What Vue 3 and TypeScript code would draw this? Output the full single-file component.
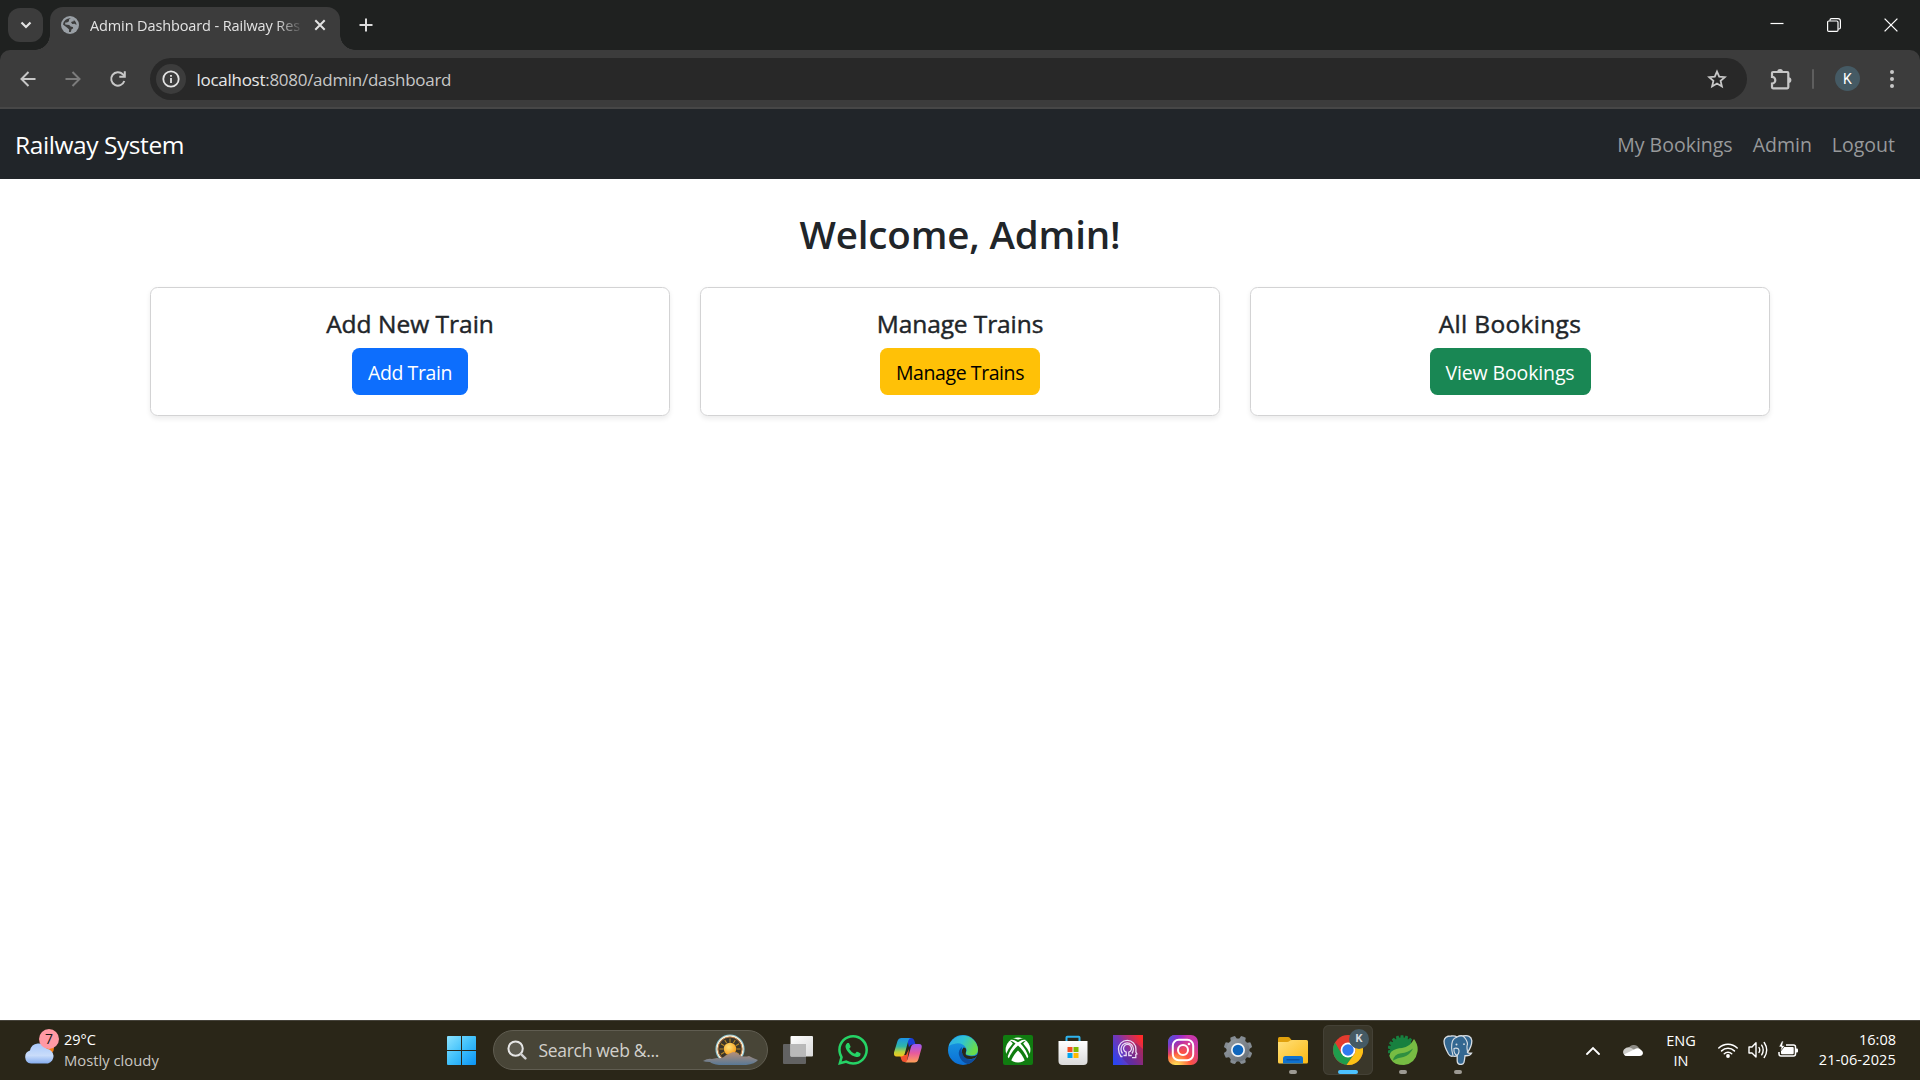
<script setup lang="ts">
interface AdminCard {
  title: string
  action: string
  tone: string
}

const cards: AdminCard[] = [
  { title: 'Add New Train', action: 'Add Train', tone: 'primary' },
  { title: 'Manage Trains', action: 'Manage Trains', tone: 'warning' },
  { title: 'All Bookings', action: 'View Bookings', tone: 'success' },
]

const gearTeeth: number[] = [0, 45, 90, 135, 180, 225, 270, 315]
const springTeeth: number[] = [150, 170, 190, 210, 230, 250, 270, 290, 310]
const sunRays: number[] = [0, 30, 60, 90, 120, 150, 180, 210, 240, 270, 300, 330]
</script>

<template>
  <div class="screen">
    <header class="tabstrip">
      <button class="tab-search" aria-label="Search tabs">
        <svg width="12" height="8" viewBox="0 0 12 8"><path d="M1.500 1.500 6 6l4.500-4.500" fill="none" stroke="#e3e3e3" stroke-width="2.200" /></svg>
      </button>
      <div class="tab">
        <svg class="favicon" width="18" height="18" viewBox="0 0 18 18">
          <circle cx="9" cy="9" r="9" fill="#9aa0a6" />
          <path d="M9.800 2.200 8 3.600v1.700L6 6.600H4.200v2l4 .5 1.400 1.500 2.300.3.3 1.400-1.800 1.100-.4 2.300A7 7 0 0 1 8 16l.1-2.400-1.900-1.900L2 8.500A7 7 0 0 1 9.800 2.200Z" fill="#3c3c3c" />
          <path d="M11.500 3.200 13 4l-.6 1.500h-1.500l-.8 1 1.200 1.400 2.300-.2 1.900 1.200A6.800 6.800 0 0 0 11.500 3.200Z" fill="#3c3c3c" />
        </svg>
        <span class="tab-title">Admin Dashboard - Railway Res</span>
        <svg class="tab-close" width="12" height="12" viewBox="0 0 12 12"><path d="m1.300 1.300 9.400 9.400m0-9.400-9.400 9.400" stroke="#e3e3e3" stroke-width="2" /></svg>
      </div>
      <svg class="tab-new" width="14" height="14" viewBox="0 0 14 14"><path d="M7 .5v13M.5 7h13" stroke="#dcdcdc" stroke-width="2" /></svg>
      <div class="window-controls">
        <svg width="14" height="14" viewBox="0 0 14 14"><path d="M.5 5.500h13" stroke="#fff" stroke-width="1.200" /></svg>
        <svg width="14" height="14" viewBox="0 0 14 14"><rect x=".6" y="3" width="10.400" height="10.400" rx="1.200" fill="none" stroke="#fff" stroke-width="1.200" /><path d="M3 2.800V2Q3 .6 4.500.6H11Q13.400.6 13.400 3v6.500q0 1.500-1.400 1.500h-.8" fill="none" stroke="#fff" stroke-width="1.200" /></svg>
        <svg width="14" height="14" viewBox="0 0 14 14"><path d="m.6.6 12.800 12.800m0-12.800L.6 13.400" stroke="#fff" stroke-width="1.300" /></svg>
      </div>
    </header>

    <div class="toolbar">
      <svg class="nav-icon" width="18" height="18" viewBox="0 0 18 18"><path d="M16.500 9H3M9.500 2 2.500 9l7 7" fill="none" stroke="#c7c7c7" stroke-width="2" /></svg>
      <svg class="nav-icon" width="18" height="18" viewBox="0 0 18 18"><path d="M1.500 9H15M8.500 2l7 7-7 7" fill="none" stroke="#7c7c7c" stroke-width="2" /></svg>
      <svg class="nav-icon" width="18" height="18" viewBox="0 0 18 18"><path d="M15.300 11A6.700 6.700 0 1 1 13.800 4.300L15.500 6" fill="none" stroke="#c7c7c7" stroke-width="2" /><path d="M15.800 1.200v5.500h-5.500" fill="none" stroke="#c7c7c7" stroke-width="2" /></svg>
      <div class="omnibox">
        <span class="site-info">
          <svg width="18" height="18" viewBox="0 0 18 18"><circle cx="9" cy="9" r="7.700" fill="none" stroke="#e3e3e3" stroke-width="1.800" /><path d="M9 8v5M9 4.900v1.800" stroke="#e3e3e3" stroke-width="1.800" /></svg>
        </span>
        <span class="url"><b>localhost</b>:8080/admin/dashboard</span>
        <svg class="star" width="20" height="20" viewBox="0 0 20 20"><path d="m10 2.600 2.200 5.100 5.600.5-4.200 3.700 1.300 5.500-4.900-2.900-4.900 2.900 1.300-5.500-4.200-3.700 5.600-.5Z" fill="none" stroke="#c7c7c7" stroke-width="1.800" /></svg>
      </div>
      <svg class="ext" width="22" height="22" viewBox="0 0 22 22"><path d="M3 4h14.300q1 0 1 1v14.300q0 1-1 1H3q-1 0-1-1v-3.800a3.300 3.300 0 0 0 0-6.600V5q0-1 1-1Z" fill="none" stroke="#c7c7c7" stroke-width="2.200" /><path d="M7.200 4a2.900 2.900 0 0 1 5.800 0ZM18.500 9.200a2.900 2.900 0 0 1 0 5.800Z" fill="#c7c7c7" /></svg>
      <i class="divider"></i>
      <span class="avatar">K</span>
      <svg class="menu" width="4" height="20" viewBox="0 0 4 20"><circle cx="2" cy="3" r="2" fill="#c7c7c7" /><circle cx="2" cy="10" r="2" fill="#c7c7c7" /><circle cx="2" cy="17" r="2" fill="#c7c7c7" /></svg>
    </div>

    <nav class="navbar">
      <a class="brand">Railway System</a>
      <div class="links">
        <a>My Bookings</a>
        <a>Admin</a>
        <a>Logout</a>
      </div>
    </nav>

    <main class="page">
      <h1>Welcome, Admin!</h1>
      <div class="cards">
        <section v-for="card in cards" :key="card.title" class="card" :class="card.tone">
          <h2>{{ card.title }}</h2>
          <a class="btn">{{ card.action }}</a>
        </section>
      </div>
    </main>

    <footer class="taskbar">
      <div class="weather">
        <svg width="36" height="38" viewBox="0 0 36 38">
          <defs><linearGradient id="cloud" x1="0" y1="0" x2="0" y2="1"><stop offset="0" stop-color="#a9c9fb" /><stop offset=".6" stop-color="#c9dcfa" /><stop offset="1" stop-color="#86aef0" /></linearGradient></defs>
          <circle cx="22" cy="20" r="7" fill="#f37b12" />
          <path d="M6 35.500a6.600 6.600 0 0 1-1-12.900 8.800 8.800 0 0 1 16.700-1.800A7.500 7.500 0 0 1 23 35.500Z" fill="url(#cloud)" />
          <circle cx="24" cy="11" r="10" fill="#ff99a4" />
          <text x="24" y="16" text-anchor="middle" font-size="14" fill="#1a1a1a">7</text>
        </svg>
        <div class="weather-text">
          <span>29°C</span>
          <span class="cond">Mostly cloudy</span>
        </div>
      </div>

      <svg class="start" width="29" height="29" viewBox="0 0 29 29">
        <defs><linearGradient id="win" x1="0" y1="0" x2="1" y2="1"><stop offset="0" stop-color="#8ce3ff" /><stop offset=".5" stop-color="#3fc0fb" /><stop offset="1" stop-color="#0a93f5" /></linearGradient></defs>
        <path d="M1 0h13v14H0V1q0-1 1-1ZM15 0h13q1 0 1 1v13H15ZM0 15h14v14H1q-1 0-1-1ZM15 15h14v13q0 1-1 1H15Z" fill="url(#win)" />
      </svg>

      <div class="search">
        <svg width="20" height="20" viewBox="0 0 20 20"><circle cx="8.600" cy="8.600" r="7.200" fill="#5d5b50" stroke="#e6e6e6" stroke-width="2" /><path d="m13.800 13.800 4.600 4.600" stroke="#d0d0d0" stroke-width="2.400" stroke-linecap="round" /></svg>
        <span class="query">Search web &amp;...</span>
        <svg class="sun" width="56" height="34" viewBox="0 0 56 34">
          <defs>
            <radialGradient id="sun" cx=".4" cy=".35" r=".7"><stop offset="0" stop-color="#ffe27a" /><stop offset="1" stop-color="#f79a14" /></radialGradient>
            <linearGradient id="hill" x1="0" y1="0" x2="0" y2="1"><stop offset="0" stop-color="#b58f78" /><stop offset="1" stop-color="#587896" /></linearGradient>
          </defs>
          <circle cx="27" cy="16" r="14" fill="#3a352a" stroke="#7fc3d9" stroke-width="1.200" />
          <circle cx="27" cy="16" r="13" fill="none" stroke="#fff3d8" stroke-width="1.400" />
          <circle cx="27" cy="16" r="12" fill="none" stroke="#d98b4a" stroke-width=".8" />
          <path v-for="a in sunRays" :key="a" d="M27 5.500v4" stroke="#b98a26" stroke-width="1" :transform="`rotate(${a} 27 16)`" />
          <circle cx="27" cy="16" r="6.200" fill="url(#sun)" />
          <path d="M0 28q5-3 9-2l5-1q5 1 8-2 5-3 8-4 4 0 8 4 4 1 8 0l4 2 5 2q-3 4-12 5H16q-7-1-9-3-5 0-7-1Z" fill="url(#hill)" />
        </svg>
      </div>

      <div class="apps">
        <div class="app">
          <svg width="30" height="30" viewBox="0 0 30 30">
            <defs><linearGradient id="tv" x1="0" y1="0" x2="1" y2="1"><stop offset="0" stop-color="#fff" /><stop offset="1" stop-color="#dadada" /></linearGradient></defs>
            <rect x="0" y="9" width="23" height="20" rx="1" fill="#626262" /><rect x="7.500" y="1" width="22.500" height="20.500" rx="1" fill="url(#tv)" /><rect x="7.500" y="9" width="15.500" height="12.500" fill="#b9b9b9" />
          </svg>
        </div>
        <div class="app">
          <svg width="30" height="30" viewBox="0 0 24 24"><path fill="#25d366" d="M17.472 14.382c-.297-.149-1.758-.867-2.030-.967-.273-.099-.471-.148-.670.150-.197.297-.767.966-.940 1.164-.173.199-.347.223-.644.075-.297-.150-1.255-.463-2.390-1.475-.883-.788-1.480-1.761-1.653-2.059-.173-.297-.018-.458.130-.606.134-.133.298-.347.446-.520.149-.174.198-.298.298-.497.099-.198.050-.371-.025-.520-.075-.149-.669-1.612-.916-2.207-.242-.579-.487-.500-.669-.510-.173-.008-.371-.010-.570-.010-.198 0-.520.074-.792.372-.272.297-1.040 1.016-1.040 2.479 0 1.462 1.065 2.875 1.213 3.074.149.198 2.096 3.200 5.077 4.487.709.306 1.262.489 1.694.625.712.227 1.360.195 1.871.118.571-.085 1.758-.719 2.006-1.413.248-.694.248-1.289.173-1.413-.074-.124-.272-.198-.570-.347m-5.421 7.403h-.004a9.870 9.870 0 0 1-5.031-1.378l-.361-.214-3.741.982.998-3.648-.235-.374a9.860 9.860 0 0 1-1.510-5.260c.001-5.450 4.436-9.884 9.888-9.884 2.640 0 5.122 1.030 6.988 2.898a9.825 9.825 0 0 1 2.893 6.994c-.003 5.450-4.437 9.884-9.885 9.884m8.413-18.297A11.815 11.815 0 0 0 12.050 0C5.495 0 .160 5.335.157 11.892c0 2.096.547 4.142 1.588 5.945L.057 24l6.305-1.654a11.882 11.882 0 0 0 5.683 1.448h.005c6.554 0 11.890-5.335 11.893-11.893a11.821 11.821 0 0 0-3.480-8.413Z" /></svg>
        </div>
        <div class="app">
          <svg width="30" height="30" viewBox="0 0 30 30">
            <defs>
              <linearGradient id="cpA" x1="0" y1="0" x2="0" y2="1"><stop offset="0" stop-color="#1c94e8" /><stop offset=".45" stop-color="#2fb6a8" /><stop offset=".75" stop-color="#b9d13c" /><stop offset="1" stop-color="#f6c51c" /></linearGradient>
              <linearGradient id="cpB" x1="0" y1="0" x2="0" y2="1"><stop offset="0" stop-color="#9a58f5" /><stop offset=".5" stop-color="#e85a9c" /><stop offset="1" stop-color="#ffa057" /></linearGradient>
            </defs>
            <path d="M14 3h4q2.500 0 3.500 3l1 3.500h-3q-2.500 0-3.500 3Z" fill="#1a3ed8" />
            <path d="M7 20h6l3-6-2 13h-2.500q-2.500 0-3.200-2.500Z" fill="#f0512f" />
            <path d="M8.500 3H18q-2 0-2.800 3l-3.400 12.500Q11 21.500 8 21.500H3.500q-3 0-2.500-4L4.500 6Q5.500 3 8.500 3Z" fill="url(#cpA)" />
            <path d="M22 9h4q3.500 0 2.600 4L25.500 24q-1 3.500-4 3.500H11.500q2.200 0 3-3l3.500-12.500q.9-3 4-3Z" fill="url(#cpB)" />
          </svg>
        </div>
        <div class="app">
          <svg width="30" height="30" viewBox="0 0 30 30">
            <defs>
              <linearGradient id="edA" x1="0" y1="0" x2="1" y2=".4"><stop offset="0" stop-color="#2fa9ea" /><stop offset=".5" stop-color="#2fc4d4" /><stop offset="1" stop-color="#68dc4c" /></linearGradient>
              <linearGradient id="edB" x1="0" y1="0" x2="0" y2="1"><stop offset="0" stop-color="#1b9de2" /><stop offset="1" stop-color="#0b6fd6" /></linearGradient>
            </defs>
            <circle cx="15" cy="15" r="15" fill="url(#edB)" />
            <path d="M.8 11A15 15 0 0 1 30 14.500Q30 20.500 23.500 20.500 17 20.500 17.800 17.800 19.500 15.500 18 13 14.500 7.500 8 8.500 3 9.200.8 11Z" fill="url(#edA)" />
            <path d="M14 12q-4 3-3 8 1.600 7 9 9.200 5-1.700 7.800-6.200Q21 26.500 16 21.500q-3.500-4-2-9.500Z" fill="#0e4c9c" />
            <path d="M15.500 12.500q-2 2-1.500 5 1.600 7.500 9.500 6.500 4.500-.8 6.500-4v6h-1.500Q30 22 29 20q-2.500 1.500-6 1.200-6.500-.3-5.200-3.400 1.300-2.600-.3-4.800Z" fill="#2a2618" />
            <path d="M30 18v12h-9q5-1.500 8-6.500Z" fill="#2a2618" />
          </svg>
        </div>
        <div class="app">
          <svg width="30" height="30" viewBox="0 0 30 30"><rect width="30" height="30" rx="2" fill="#107c10" /><circle cx="15" cy="15" r="12.400" fill="#fff" /><path d="M7 4.500Q11 4 15 7.300 19 4 23 4.500L22 3.500Q19 2.600 15 4.800 11 2.600 8 3.500ZM15 10.500q6 5 9.500 13.500-2 2-2.500 2Q19 19 15 15.500 11 19 8 26q-.5 0-2.500-2Q9 15.500 15 10.500ZM6.800 5.500q3 .3 5.700 3Q7 14 4.300 22.500 3.500 21.500 2.800 19.500 5.500 13 9.800 8.500 8.200 6.500 6.800 5.500ZM23.200 5.500q-3 .3-5.700 3Q23 14 25.700 22.500q.8-1 1.500-3Q24.500 13 20.200 8.500 21.800 6.500 23.200 5.500Z" fill="#107c10" /></svg>
        </div>
        <div class="app">
          <svg width="30" height="30" viewBox="0 0 30 30"><defs><linearGradient id="bag" x1="0" y1="0" x2="0" y2="1"><stop offset="0" stop-color="#fff" /><stop offset="1" stop-color="#dadada" /></linearGradient></defs><path d="M8.500 6V2.500q0-.8.800-.8h11.400q.8 0 .8.800V6" fill="none" stroke="#2fb4ee" stroke-width="2" /><path d="M.5 6h29v20q0 4-4 4h-21q-4 0-4-4Z" fill="url(#bag)" /><path d="M9.500 12h5v5h-5Z" fill="#f25022" /><path d="M15.500 12h5v5h-5Z" fill="#7fba00" /><path d="M9.500 18h5v5h-5Z" fill="#00a4ef" /><path d="M15.500 18h5v5h-5Z" fill="#ffb900" /></svg>
        </div>
        <div class="app">
          <svg width="30" height="30" viewBox="0 0 30 30"><defs><linearGradient id="ps" x1="0" y1=".8" x2="1" y2=".2"><stop offset="0" stop-color="#2a45f0" /><stop offset=".45" stop-color="#7a35b0" /><stop offset="1" stop-color="#ff2a2a" /></linearGradient></defs><rect width="30" height="30" fill="url(#ps)" /><path d="m9 23 7 7h14V14l-7-6Z" fill="#4a1c78" opacity=".35" /><path d="M9.500 21.500H8Q5.500 18 5.500 14a8.700 8.700 0 0 1 17.400 0v3l1 2-1.100.5v3.200H19M9.500 18.500Q8 16.500 8 14a6.200 6.200 0 0 1 12.400 0q0 2.500-1.500 4.500M10.500 20.500h2.700v-3.300a4 4 0 1 1 2.600 0v3.300h3" fill="none" stroke="#e8dcf5" stroke-width="1.300" /></svg>
        </div>
        <div class="app">
          <svg width="30" height="30" viewBox="0 0 30 30">
            <defs>
              <radialGradient id="igA" cx=".27" cy="1.080" r="1"><stop offset="0" stop-color="#fd5" /><stop offset=".1" stop-color="#fd5" /><stop offset=".5" stop-color="#ff543e" /><stop offset="1" stop-color="#c837ab" /></radialGradient>
              <radialGradient id="igB" cx="-.1" cy="0" r=".75"><stop offset="0" stop-color="#3771c8" /><stop offset=".3" stop-color="#5a4fd6" /><stop offset="1" stop-color="#60f" stop-opacity="0" /></radialGradient>
            </defs>
            <rect width="30" height="30" rx="7" fill="url(#igA)" /><rect width="30" height="30" rx="7" fill="url(#igB)" />
            <rect x="4.800" y="4.800" width="20.400" height="20.400" rx="6" fill="none" stroke="#fff" stroke-width="2" /><circle cx="15" cy="15" r="5" fill="none" stroke="#fff" stroke-width="2" /><circle cx="21" cy="9" r="1.300" fill="#fff" />
          </svg>
        </div>
        <div class="app">
          <svg width="30" height="30" viewBox="0 0 30 30"><defs><linearGradient id="gear" x1="0" y1="0" x2="1" y2="1"><stop offset="0" stop-color="#9aa0a6" /><stop offset="1" stop-color="#626a72" /></linearGradient></defs><path v-for="a in gearTeeth" :key="a" d="M11.500 5 12.500.8q2.500-.6 5 0l1 4.200Z" fill="#858c93" :transform="`rotate(${a + 22.5} 15 15)`" /><circle cx="15" cy="15" r="11.500" fill="url(#gear)" /><circle cx="15" cy="15" r="7" fill="#f2f4f6" /><circle cx="15" cy="15" r="5.300" fill="#0f66bd" /></svg>
        </div>
        <div class="app running">
          <svg width="30" height="30" viewBox="0 0 30 30"><defs><linearGradient id="fold" x1="0" y1="0" x2="1" y2="1"><stop offset="0" stop-color="#ffe07a" /><stop offset="1" stop-color="#fcb913" /></linearGradient></defs><path d="M0 3.500Q0 2 1.500 2H10q1 0 1.700.8L13.500 5v3H0Z" fill="#e0a00c" /><path d="M0 7h9q1.500 0 2.500-1t2.500-1h14.500Q30 5 30 6.500V27q0 1.500-1.500 1.500h-27Q0 28.500 0 27Z" fill="url(#fold)" /><path d="M5 28.500V23.500Q5 21 7.500 21h15q2.500 0 2.500 2.500v5Z" fill="#0f72cf" /><path d="M8.500 24.800h13" stroke="#0b4c9a" stroke-width="1.200" /></svg>
        </div>
        <div class="app running active">
          <svg width="30" height="30" viewBox="0 0 30 30"><circle cx="15" cy="15" r="15" fill="#e33b2e" /><path d="M2 7.500A15 15 0 0 0 13.500 29.900L21.500 18.700 8.500 18.700Z" fill="#1f9d4d" /><path d="M15 7.500H28A15 15 0 0 1 13.500 29.900L21.500 18.700A7.500 7.500 0 0 0 15 7.500Z" fill="#fbc116" /><circle cx="15" cy="15" r="7.400" fill="#fff" /><circle cx="15" cy="15" r="5.700" fill="#2f7af0" /></svg>
          <span class="profile">K</span>
        </div>
        <div class="app running">
          <svg width="30" height="30" viewBox="0 0 30 30"><path v-for="a in springTeeth" :key="a" d="M24.500 12.500 28.300 13.200v2.600l-3.800.7Z" fill="#17803f" :transform="`rotate(${a} 14 14.500)`" /><circle cx="14" cy="14.500" r="11.800" fill="#17803f" /><path d="M26 4Q30.500 10 29.500 16.500 27.500 28.500 16 30 6 30 3 24.500 0 20 3.500 16.500 8 13 14 13 22 12 26 4Z" fill="#77bc43" /><path d="M5 25.500Q6 19 13 18.200 20 17.500 25 13.500 22 20 15.500 22 9.500 22.500 5 25.500Z" fill="#17803f" opacity=".75" /></svg>
        </div>
        <div class="app running">
          <svg width="30" height="30" viewBox="0 0 30 30"><path d="M8 1Q12 .5 14 2q3-1.800 6-1 8-1.500 8.800 4.500Q29 11 24.500 17.500q1 1 4 .7-1.500 2.800-6.500 2.500-.5 4.500-1 6.500-1 2.500-3.800 2.300-3-.5-3-4V20.500q-2.200 1.500-4.200.5Q7.500 22 5.500 19 1 11 1 6 1.500 1 8 1Z" fill="#336791" stroke="#d7dde3" stroke-width="1.300" /><path d="M10 20.500Q7.500 12 9.500 6 11 2.500 14 2.200M20 1q4 3.500 4.500 8-.8 2-.5 4.500.5 2 .5 4M14.200 20.500Q10.500 19 11 13.500 13.500 12.500 15.500 14q1.500 3-1.300 6.500" fill="none" stroke="#d7dde3" stroke-width="1.100" /><circle cx="13.500" cy="9.500" r="1" fill="#d7dde3" /><circle cx="21" cy="9.200" r=".9" fill="#d7dde3" /></svg>
        </div>
      </div>

      <div class="tray">
        <svg class="chev" width="14" height="9" viewBox="0 0 14 9"><path d="m1 8 6-6 6 6" fill="none" stroke="#fff" stroke-width="1.800" stroke-linecap="round" /></svg>
        <svg class="onedrive" width="20" height="14" viewBox="0 0 20 14"><path d="M5 6.500A6 6 0 0 1 16 5l-3 5Z" fill="#8d8b85" /><path d="M4 13A4 4 0 0 1 1 6.500Q5 2.500 10 6l6 4.500Z" fill="#cfcecb" /><path d="M1 11.500Q7 8.500 13 5.500 16 4.500 17.500 6.500 20 8 20 10q-.3 3-3.500 3H4.500Q2 13 1 11.500Z" fill="#fff" /></svg>
        <div class="lang"><span>ENG</span><span>IN</span></div>
        <svg class="wifi" width="20" height="16" viewBox="0 0 20 16"><path d="M.8 6a13 13 0 0 1 18.400 0M3.600 8.900a9 9 0 0 1 12.800 0M6.300 11.700a5.200 5.200 0 0 1 7.400 0" fill="none" stroke="#fff" stroke-width="1.500" stroke-linecap="round" /><circle cx="10" cy="14" r="1.900" fill="#fff" /></svg>
        <svg class="sound" width="20" height="18" viewBox="0 0 20 18"><path d="M1 6h3l4-4.200V16L4 12H1Z" fill="none" stroke="#fff" stroke-width="1.400" stroke-linejoin="round" /><path d="M11 6.500q1.500 2.500 0 5M13.700 4.200q3 4.800 0 9.600M16.200 1.500q5 7.500 0 15" fill="none" stroke="#fff" stroke-width="1.400" stroke-linecap="round" /></svg>
        <svg class="battery" width="20" height="18" viewBox="0 0 20 18"><path d="M8 4h7.500Q17.500 4 17.500 6v7q0 2-2 2H3Q1 15 1 13v-2" fill="none" stroke="#fff" stroke-width="1.500" /><rect x="3" y="6" width="12.700" height="7.200" rx="1" fill="#fff" /><path d="M18 7.500h1q1 0 1 1v2q0 1-1 1h-1Z" fill="#fff" /><path d="m3.800 0-3 6h2.400l-.8 4.500L7 4.500H4.500L5.500 0Z" fill="#fff" stroke="#2a2618" stroke-width=".7" /></svg>
        <div class="clock"><span>16:08</span><span class="date">21-06-2025</span></div>
      </div>
    </footer>
  </div>
</template>

<style>
html,
body {
  background: #fff;
}
</style>

<style scoped>
* {
  box-sizing: border-box;
}
.screen {
  display: flex;
  flex-direction: column;
  width: 1920px;
  height: 1080px;
  overflow: hidden;
  font-family: "Open Sans", "Noto Sans", sans-serif;
  background: #fff;
}
svg {
  display: block;
  flex: none;
}
.tabstrip {
  display: flex;
  flex: none;
  align-items: center;
  height: 60px;
  margin-bottom: -10px;
  padding-bottom: 10px;
  background: #1f2120;
}
.tab-search {
  display: flex;
  align-items: center;
  justify-content: center;
  width: 35px;
  height: 34px;
  margin-left: 8px;
  padding: 0;
  border: 0;
  border-radius: 12px;
  background: #3c3c3c;
}
.tab {
  position: relative;
  display: flex;
  align-items: center;
  align-self: flex-end;
  width: 290px;
  height: 43px;
  margin-left: 7px;
  padding: 0 14px 7px 11px;
  border-radius: 13px 13px 0 0;
  background: #3c3c3c;
}
.tab::before,
.tab::after {
  content: "";
  position: absolute;
  bottom: 0;
  width: 15px;
  height: 15px;
}
.tab::before {
  right: 100%;
  background: radial-gradient(circle at 0 0, transparent 14.5px, #3c3c3c 15px);
}
.tab::after {
  left: 100%;
  background: radial-gradient(circle at 100% 0, transparent 14.5px, #3c3c3c 15px);
}
.tab-title {
  width: 212px;
  margin-left: 11px;
  padding-top: 2px;
  white-space: nowrap;
  font-size: 14.5px;
  letter-spacing: -0.12px;
  line-height: 22px;
  color: #e3e3e3;
  -webkit-mask-image: linear-gradient(90deg, #000 186px, transparent 214px);
  mask-image: linear-gradient(90deg, #000 186px, transparent 214px);
}
.tab-close {
  margin-left: auto;
}
.tab-new {
  margin-left: 19px;
}
.window-controls {
  display: flex;
  gap: 43px;
  margin-left: auto;
  padding-right: 22px;
}
.toolbar {
  display: flex;
  flex: none;
  align-items: center;
  height: 59px;
  padding: 0 26px 0 18.500px;
  border-bottom: 2px solid #474747;
  border-radius: 10px 10px 0 0;
  background: #3c3c3c;
}
.nav-icon {
  margin-right: 27px;
}
.omnibox {
  display: flex;
  align-items: center;
  width: 1597px;
  height: 42px;
  margin-left: -3.500px;
  padding: 0 20px 0 6px;
  border-radius: 21px;
  background: #282828;
}
.site-info {
  display: flex;
  align-items: center;
  justify-content: center;
  width: 30px;
  height: 30px;
  border-radius: 50%;
  background: #3c3c3c;
}
.url {
  margin-left: 10.500px;
  padding-top: 2px;
  font-size: 17px;
  letter-spacing: -0.28px;
  color: #c7c7c7;
}
.url b {
  font-weight: 400;
  color: #e8e8e8;
}
.star {
  margin-left: auto;
}
.ext {
  margin-left: 23px;
}
.divider {
  width: 2px;
  height: 20px;
  margin-left: 20px;
  border-radius: 1px;
  background: #5e5e5e;
}
.avatar {
  width: 25px;
  height: 25px;
  margin-left: 21px;
  border-radius: 50%;
  background: #455a64;
  color: #fff;
  font: 400 14px/26px Roboto, sans-serif;
  text-align: center;
}
.menu {
  margin-left: auto;
}
.navbar {
  display: flex;
  flex: none;
  align-items: center;
  justify-content: space-between;
  height: 70px;
  padding: 1px 25px 0 15px;
  background: #212529;
}
.brand {
  font-size: 24.5px;
  letter-spacing: -0.42px;
  color: #fff;
}
.links {
  display: flex;
  gap: 20px;
  font-size: 19.5px;
  color: #97999b;
}
.page {
  flex: 1;
  padding-top: 31px;
  color: #212529;
}
h1 {
  margin: 0 0 29px;
  font-size: 38.5px;
  font-weight: 600;
  letter-spacing: -0.15px;
  line-height: 48px;
  text-align: center;
}
.cards {
  display: flex;
  gap: 30px;
  width: 1620px;
  margin: 0 auto;
}
.card {
  display: flex;
  flex: 1;
  flex-direction: column;
  align-items: center;
  height: 129px;
  padding-top: 20px;
  border: 1px solid #d3d3d4;
  border-radius: 7.5px;
  box-shadow: 0 2.5px 5px rgba(0, 0, 0, 0.075);
}
h2 {
  margin: 0 0 10px;
  font-size: 24.5px;
  font-weight: 400;
  -webkit-text-stroke: 0.45px #212529;
  line-height: 31px;
  height: 30px;
}
.btn {
  width: 160px;
  height: 47px;
  border-radius: 7.5px;
  font-size: 19.5px;
  line-height: 49px;
  text-align: center;
  white-space: nowrap;
}
.primary .btn {
  width: 116px;
  letter-spacing: -0.4px;
  background: #0d6efd;
  color: #fff;
}
.warning h2 {
  letter-spacing: -0.1px;
}
.warning .btn {
  letter-spacing: -0.42px;
  background: #ffc107;
  color: #000;
}
.success h2 {
  letter-spacing: 0.32px;
}
.success .btn {
  width: 161px;
  letter-spacing: -0.13px;
  background: #198754;
  color: #fff;
}
.taskbar {
  display: flex;
  flex: none;
  align-items: center;
  height: 60px;
  padding-bottom: 1px;
  border-top: 1px solid #45423a;
  background: #2a2618;
  color: #fff;
  font-size: 14.5px;
}
.weather {
  display: flex;
  align-items: center;
  width: 422px;
  padding-left: 25px;
}
.weather svg {
  margin-top: -7px;
}
.weather-text {
  display: flex;
  flex-direction: column;
  margin-left: 3px;
  padding-bottom: 1px;
  line-height: 20px;
}
.cond {
  font-size: 14.8px;
  color: #c9c7c2;
}
.start {
  margin: 0 17px 0 25px;
}
.search {
  display: flex;
  align-items: center;
  width: 275px;
  height: 40px;
  padding: 0 8px 0 13px;
  border: 1px solid #605d51;
  border-radius: 20px;
  background: #484537;
}
.query {
  margin-left: 11.5px;
  font-size: 17.5px;
  letter-spacing: -0.3px;
  color: #d2d0cb;
}
.sun {
  margin-left: auto;
}
.apps {
  display: flex;
  margin-left: 5px;
}
.app {
  position: relative;
  display: flex;
  align-items: center;
  justify-content: center;
  width: 50px;
  height: 50px;
  margin-right: 5px;
  border-radius: 6px;
}
.running::after {
  content: "";
  position: absolute;
  bottom: 1px;
  left: 21px;
  width: 8px;
  height: 4px;
  border-radius: 2px;
  background: #9d9a93;
}
.active {
  background: #3a372a;
  box-shadow: inset 0 0 0 1px #444136;
}
.active::after {
  left: 15px;
  width: 20px;
  background: #4cc2ff;
}
.profile {
  position: absolute;
  top: 4px;
  left: 26px;
  width: 20px;
  height: 20px;
  border-radius: 50%;
  background: #455a64;
  color: #d8dde0;
  font: 700 11px/20px Roboto, sans-serif;
  text-align: center;
}
.tray {
  display: flex;
  align-items: center;
  flex: 1;
  padding-right: 24px;
}
.lang,
.clock {
  display: flex;
  flex-direction: column;
  line-height: 20px;
}
.chev {
  margin-left: 98px;
}
.onedrive {
  margin-left: 23px;
}
.lang {
  align-items: center;
  width: 34px;
  margin-left: 21px;
  padding-top: 1px;
}
.wifi {
  margin-left: 20px;
}
.sound,
.battery {
  margin-left: 10px;
}
.clock {
  align-items: flex-end;
  margin-left: auto;
  padding-bottom: 1px;
}
.date {
  letter-spacing: 0.16px;
}
</style>
